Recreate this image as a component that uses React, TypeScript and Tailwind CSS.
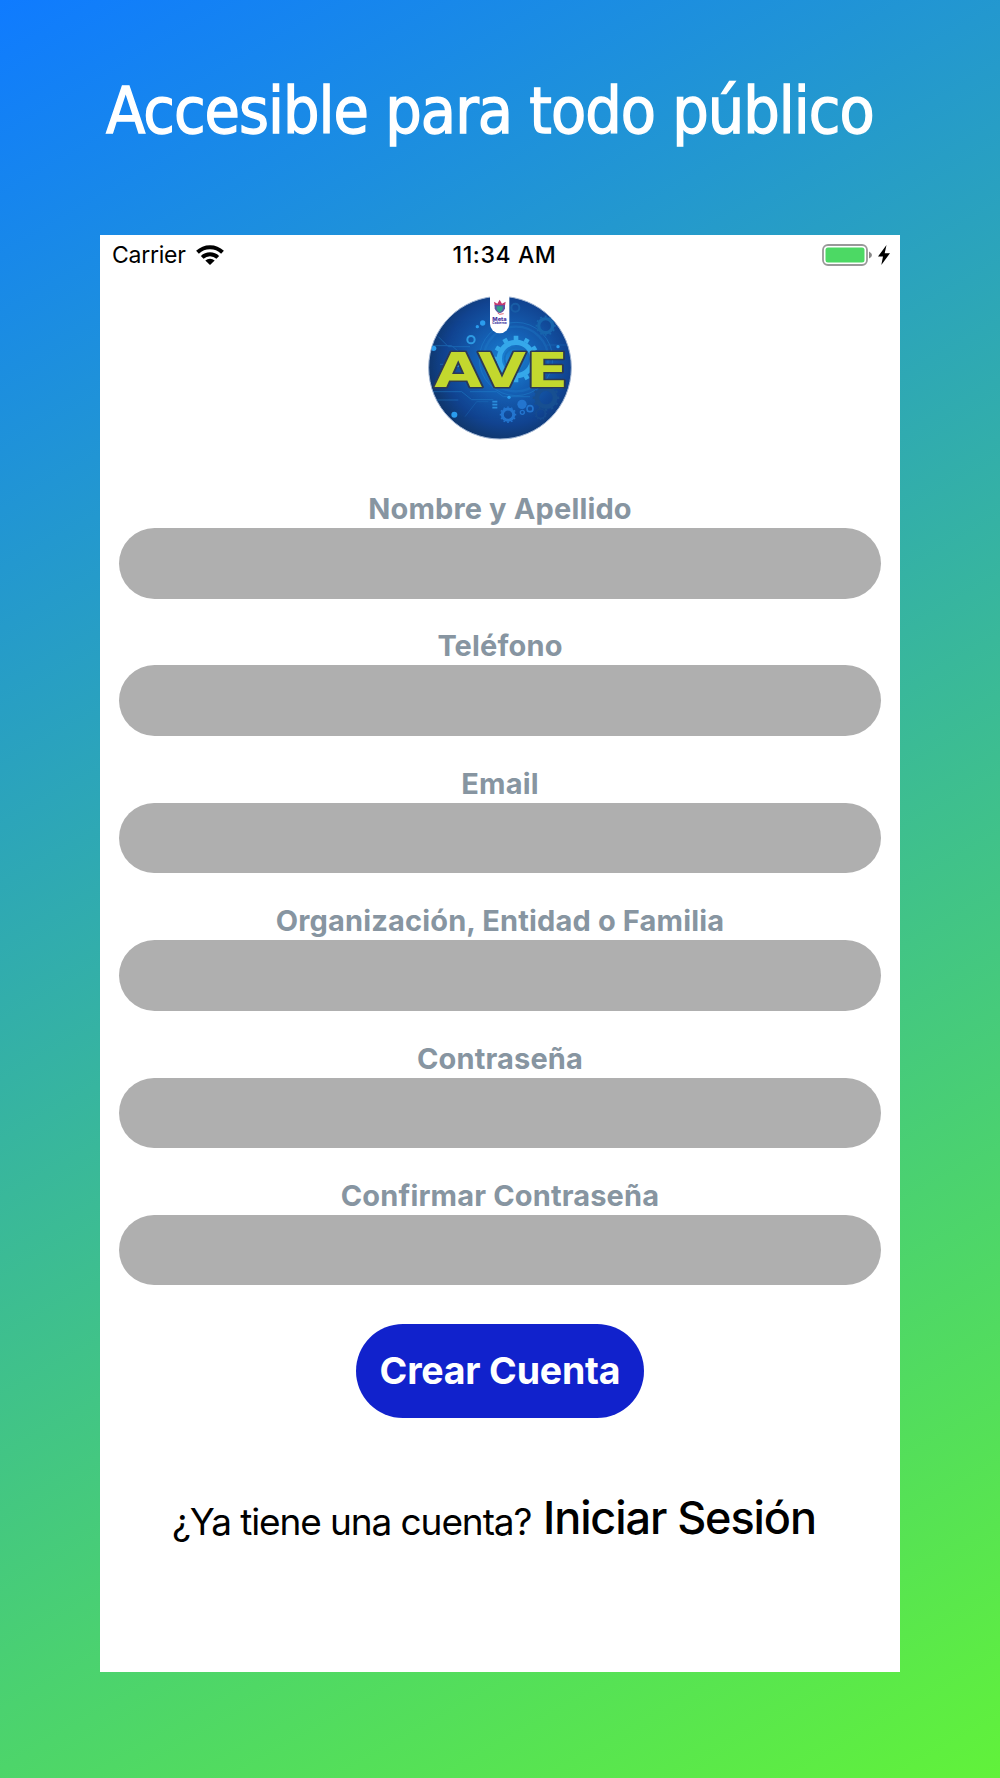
const fields = [
  { id: "name", label: "Nombre y Apellido", type: "text" },
  { id: "phone", label: "Teléfono", type: "tel" },
  { id: "email", label: "Email", type: "email" },
  { id: "organization", label: "Organización, Entidad o Familia", type: "text" },
  { id: "password", label: "Contraseña", type: "password" },
  { id: "confirm", label: "Confirmar Contraseña", type: "password" },
];

const teeth = [0, 30, 60, 90, 120, 150, 180, 210, 240, 270, 300, 330];

function Gear({ x, y, r, color, width }: { x: number; y: number; r: number; color: string; width: number }) {
  return (
    <g transform={`translate(${x} ${y})`} stroke={color} fill="none">
      <circle r={r} strokeWidth={width} />
      {teeth.map((angle) => (
        <path
          key={angle}
          d={`M0 ${-r - width / 2 + 1}v${-r * 0.25}`}
          strokeWidth={r * 0.28}
          transform={`rotate(${angle})`}
        />
      ))}
    </g>
  );
}

function Logo() {
  return (
    <svg viewBox="0 0 480 495" className="h-[165px] w-[160px]" role="img" aria-label="AVE">
      <defs>
        <radialGradient id="disc" cx="55%" cy="46%" r="55%">
          <stop offset="0" stopColor="#1c86d8" />
          <stop offset="0.4" stopColor="#1560b4" />
          <stop offset="0.8" stopColor="#114390" />
          <stop offset="1" stopColor="#10386f" />
        </radialGradient>
        <clipPath id="disc-clip">
          <circle cx="240" cy="248" r="213" />
        </clipPath>
      </defs>
      <circle cx="240" cy="248" r="214" fill="url(#disc)" stroke="#9fb4d3" strokeWidth="3" />
      <g clipPath="url(#disc-clip)">
        <g fill="none" stroke="#2386cf" strokeWidth="3" opacity="0.45">
          <circle cx="288" cy="222" r="110" />
          <circle cx="288" cy="222" r="97" strokeWidth="7" opacity="0.6" />
          <path d="M30 182H95L122 205M55 155L85 185H150M26 320H125L155 344H220M40 345H115M60 238H130M150 320H230L250 335H330" />
          <path d="M135 395L170 350H205M380 180H450M365 310H430" opacity="0.6" />
        </g>
        <Gear x={288} y={222} r={50} color="#35a8ea" width={16} />
        <circle cx="288" cy="222" r="34" fill="none" stroke="#1770bf" strokeWidth="5" />
        <Gear x={377} y={122} r={21} color="#1765ad" width={10} />
        <Gear x={378} y={338} r={27} color="#174f91" width={14} />
        <Gear x={264} y={389} r={17} color="#2375cf" width={9} />
        <Gear x={362} y={386} r={14} color="#164b90" width={5} />
        <circle cx="286" cy="68" r="12" fill="none" stroke="#185da6" strokeWidth="6" />
        <circle cx="153" cy="164" r="11" fill="none" stroke="#2e9ae2" strokeWidth="6" />
        <g fill="#2b9ced">
          <circle cx="188" cy="114" r="8" />
          <circle cx="172" cy="125" r="5" />
          <circle cx="41" cy="190" r="8" />
          <circle cx="103" cy="389" r="9" />
          <circle cx="110" cy="238" r="9" />
          <circle cx="414" cy="185" r="5" />
          <circle cx="267" cy="337" r="5" />
        </g>
        <circle cx="306" cy="358" r="14" fill="#2375cf" />
        <circle cx="330" cy="371" r="9" fill="none" stroke="#2375cf" strokeWidth="5" />
        <circle cx="307" cy="382" r="6" fill="none" stroke="#2375cf" strokeWidth="4" />
        <path d="M217 350h15M217 359h15M217 368h15" stroke="#2b8ddb" strokeWidth="5" />
      </g>
      {/* municipal badge */}
      <path d="M210 28H268V116A29 29 0 0 1 210 116Z" fill="#fff" />
      <path d="M222 50l10 6 7-12 7 12 11-6-3 17H225Z" fill="#c33b6f" />
      <path d="M224 60H255V70Q252 82 239 85Q227 81 224 70Z" fill="#5b55a3" />
      <path d="M230 64H248V72Q246 80 239 82Q232 79 230 72Z" fill="#2fa38b" />
      <path d="M233 84l6 4 12-2" stroke="#e36a78" strokeWidth="3" fill="none" />
      <g fill="#4936a0" fontFamily="Inter, sans-serif" fontWeight="800">
        <text x="217" y="107" fontSize="15" textLength="43" lengthAdjust="spacingAndGlyphs">Meta</text>
        <text x="217" y="118" fontSize="9" textLength="43" lengthAdjust="spacingAndGlyphs">Gobierno</text>
      </g>
      <text
        x="43"
        y="305"
        fontFamily="'DejaVu Sans', sans-serif"
        fontWeight="700"
        fontSize="143"
        textLength="402"
        lengthAdjust="spacingAndGlyphs"
        fill="#c3d82e"
        stroke="#2c3a55"
        strokeWidth="9"
        strokeLinejoin="round"
        paintOrder="stroke"
      >
        AVE
      </text>
    </svg>
  );
}

function StatusBar() {
  return (
    <div className="grid h-10 grid-cols-3 items-center pr-[10px] pl-3 text-[23px] leading-none text-black">
      <div className="flex items-center gap-[10px]">
        <span className="pt-0.5 tracking-[-0.25px]">Carrier</span>
        <svg viewBox="0 0 28 20" className="h-5 w-7" fill="none" stroke="#000" strokeWidth="4">
          <path d="M1.5 7.3A18 18 0 0 1 26.5 7.3" />
          <path d="M6.2 12.4A11.3 11.3 0 0 1 21.8 12.4" />
          <path d="M14 20L9.3 15.6A7 7 0 0 1 18.7 15.6Z" fill="#000" stroke="none" />
        </svg>
      </div>
      <div className="pt-0.5 pl-[7px] text-center font-medium tracking-[0.6px] whitespace-nowrap">11:34 AM</div>
      <div className="flex items-center justify-end gap-[6px]">
        <svg viewBox="0 0 50 22" className="h-[22px] w-[50px]">
          <rect x="1" y="1" width="44" height="20" rx="5" fill="#fff" stroke="#999" strokeWidth="1.8" />
          <rect x="3.5" y="3.5" width="39" height="15" rx="2.5" fill="#4cd964" />
          <path d="M47 7.5Q50 9 50 11T47 14.5Z" fill="#888" />
        </svg>
        <svg viewBox="0 0 12 20" className="h-5 w-3">
          <path d="M8.5 0L0 11.5H5L3.3 20L12 8.2H6.7Z" fill="#000" />
        </svg>
      </div>
    </div>
  );
}

export default function App() {
  return (
    <main className="h-[1778px] w-[1000px] overflow-hidden bg-[linear-gradient(150.6deg,#0f7bff,#61f23a)] font-['Inter',sans-serif]">
      <h1 className="flex h-[234.5px] items-start pt-[69px] pl-[106px] font-['DejaVu_Sans_Condensed','DejaVu_Sans',sans-serif] text-[64px] leading-[84px] font-normal tracking-[-1px] whitespace-nowrap text-white [font-stretch:condensed] [-webkit-text-stroke:1.3px_white]">
        Accesible para todo público
      </h1>

      <section className="mx-auto flex h-[1437px] w-[800px] flex-col bg-white">
        <StatusBar />
        <div className="mt-[10.5px] flex justify-center">
          <Logo />
        </div>

        <form className="flex flex-col px-[19px] pt-[41px]">
          {fields.map((field) => (
            <div key={field.id} className="flex h-[137.4px] flex-col">
              <label
                htmlFor={field.id}
                className="h-[37px] text-center text-[29px] leading-[36px] font-bold tracking-[0.15px] text-[#8795a1]"
              >
                {field.label}
              </label>
              <input
                id={field.id}
                type={field.type}
                className="h-[70.5px] w-full rounded-full bg-[#afafaf] px-8 text-[29px] outline-none"
              />
            </div>
          ))}
          <button
            type="button"
            className="mt-[9px] h-[94px] w-[288px] self-center rounded-full bg-[#1122cc] text-[37.5px] font-bold tracking-[-0.2px] text-white"
          >
            Crear Cuenta
          </button>
        </form>

        <p className="mt-[73px] flex items-end pl-[72px] whitespace-nowrap text-black">
          <span className="w-[371px] pb-[3px] text-[37px] leading-[48px] tracking-[-1.1px]">¿Ya tiene una cuenta?</span>
          <a href="#" className="pb-1 text-[45px] leading-[54px] font-medium tracking-[-1.1px]">
            Iniciar Sesión
          </a>
        </p>
      </section>
    </main>
  );
}
